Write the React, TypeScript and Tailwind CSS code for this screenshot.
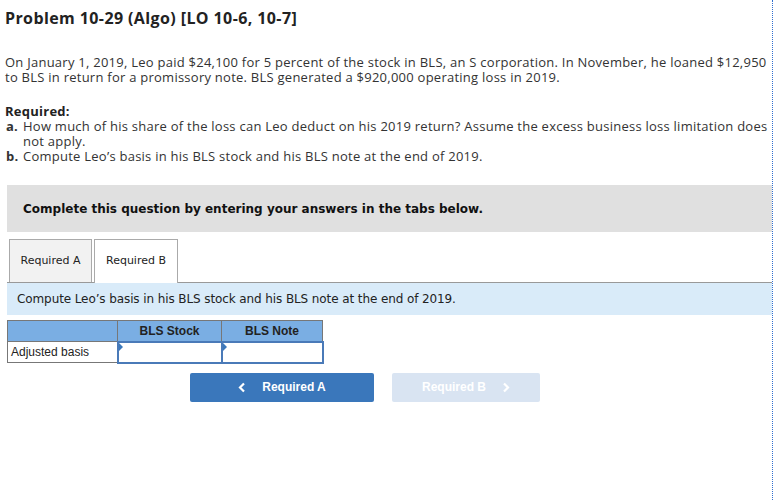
import React from "react";

export default function App() {
  return (
    <div className="relative w-[775px] h-[500px] bg-white overflow-hidden">
      <div className="absolute left-[772px] top-0 h-[500px] border-l border-dotted border-[#2f6fd0]" />
      <div className="w-[772px] pl-[5px] font-['Open_Sans','Lato',sans-serif]">
        <h1 className="pt-[8px] text-[16px] leading-[20px] font-bold text-[#222] whitespace-nowrap tracking-[0.4px]">
          Problem 10-29 (Algo) [LO 10-6, 10-7]
        </h1>
        <div className="mt-[27px] text-[13px] leading-[15px] text-[#333] whitespace-nowrap tracking-[0.25px]">
          <p>
            On January 1, 2019, Leo paid $24,100 for 5 percent of the stock in BLS, an S corporation. In November, he loaned $12,950
            <br />
            to BLS in return for a promissory note. BLS generated a $920,000 operating loss in 2019.
          </p>
          <p className="mt-[19px] font-bold text-[#222]">Required:</p>
          <div className="flex">
            <span className="w-[18px] pl-[1px] font-bold">a.</span>
            <span className="flex-1">
              How much of his share of the loss can Leo deduct on his 2019 return? Assume the excess business loss limitation does
              <br />
              not apply.
            </span>
          </div>
          <div className="flex">
            <span className="w-[18px] pl-[1px] font-bold">b.</span>
            <span className="flex-1">Compute Leo’s basis in his BLS stock and his BLS note at the end of 2019.</span>
          </div>
        </div>
      </div>
      <div className="ml-[7px] w-[765px]">
        <div className="mt-[21px] h-[47px] bg-[#e0e0e0] flex items-center pl-[16px] text-[12px] font-bold text-[#111] font-['DejaVu_Sans','Verdana',sans-serif]">
          Complete this question by entering your answers in the tabs below.
        </div>
        <div className="mt-[7px] flex items-end gap-[2px] pl-[2px] border-b border-[#999]">
          <div className="w-[83px] h-[43px] bg-[#f2f2f2] border border-b-0 border-[#aaa] flex items-center justify-center text-[11px] text-[#222] font-['DejaVu_Sans','Verdana',sans-serif]">
            Required A
          </div>
          <div className="w-[84px] h-[44px] -mb-px bg-white border border-b-0 border-[#aaa] flex items-center justify-center text-[11px] text-[#222] font-['DejaVu_Sans','Verdana',sans-serif]">
            Required B
          </div>
        </div>
        <div className="h-[32px] bg-[#d9ebf9] flex items-center pl-[10px] text-[12px] text-[#222] font-['DejaVu_Sans','Verdana',sans-serif] tracking-[-0.1px]">
          Compute Leo’s basis in his BLS stock and his BLS note at the end of 2019.
        </div>
        <table className="mt-[5px] border-collapse font-['Liberation_Sans','Arial',sans-serif] text-[12px]">
          <tbody>
            <tr className="h-[21px] bg-[#7aaee3]">
              <td className="w-[110px] border border-[#777]"></td>
              <td className="w-[104px] border border-[#777] text-center font-bold text-[#222]">BLS Stock</td>
              <td className="w-[101px] border border-[#777] text-center font-bold text-[#222]">BLS Note</td>
            </tr>
            <tr className="h-[21px]">
              <td className="border border-[#777] pl-[3px] text-[#222]">Adjusted basis</td>
              <td className="border-2 border-[#4a7ab8] relative p-0">
                <div className="absolute left-0 top-0 w-0 h-0 border-t-[4px] border-b-[4px] border-l-[4px] border-t-transparent border-b-transparent border-l-[#3b78bb]" />
              </td>
              <td className="border-2 border-[#4a7ab8] relative p-0">
                <div className="absolute left-0 top-0 w-0 h-0 border-t-[4px] border-b-[4px] border-l-[4px] border-t-transparent border-b-transparent border-l-[#3b78bb]" />
              </td>
            </tr>
          </tbody>
        </table>
        <div className="mt-[9px] ml-[183px] flex gap-[18px] font-['Liberation_Sans','Arial',sans-serif] text-[12px] font-bold text-white">
          <div className="w-[184px] h-[29px] rounded-[2px] bg-[#3a77bb] flex items-center justify-center gap-[16px]">
            <svg width="8" height="11" viewBox="0 0 8 11"><path d="M6 1.5 L2 5.5 L6 9.5" stroke="white" strokeWidth="2.2" fill="none" /></svg>
            <span>Required A</span>
          </div>
          <div className="w-[148px] h-[29px] rounded-[2px] bg-[#d9e4f2] flex items-center justify-center gap-[16px]">
            <span>Required B</span>
            <svg width="8" height="11" viewBox="0 0 8 11"><path d="M2 1.5 L6 5.5 L2 9.5" stroke="white" strokeWidth="2.2" fill="none" /></svg>
          </div>
        </div>
      </div>
    </div>
  );
}
